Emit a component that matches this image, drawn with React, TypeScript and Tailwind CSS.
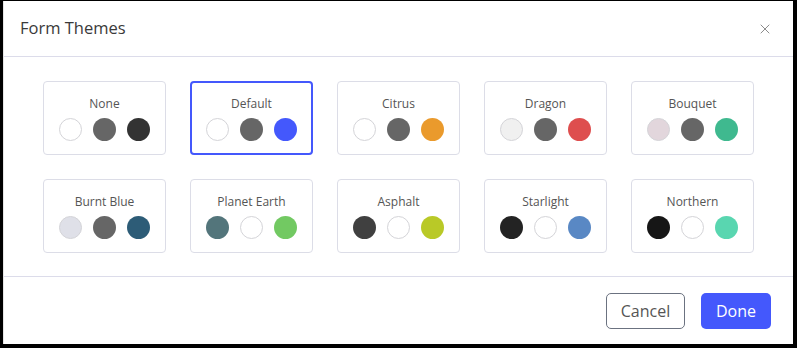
import { X } from 'lucide-react'

interface Theme {
  name: string
  colors: string[]
}

const THEMES: Theme[] = [
  { name: 'None', colors: ['#ffffff', '#666666', '#333333'] },
  { name: 'Default', colors: ['#ffffff', '#666666', '#4458fc'] },
  { name: 'Citrus', colors: ['#ffffff', '#666666', '#ea9a2c'] },
  { name: 'Dragon', colors: ['#f0f0f0', '#666666', '#de4e4e'] },
  { name: 'Bouquet', colors: ['#e2d6dc', '#666666', '#3fb98f'] },
  { name: 'Burnt Blue', colors: ['#dfe0e8', '#666666', '#2d5c77'] },
  { name: 'Planet Earth', colors: ['#53757b', '#ffffff', '#72c962'] },
  { name: 'Asphalt', colors: ['#404040', '#ffffff', '#b9c927'] },
  { name: 'Starlight', colors: ['#232323', '#ffffff', '#5988c4'] },
  { name: 'Northern', colors: ['#161616', '#ffffff', '#59d6b0'] },
]

const SELECTED = 'Default'

function Swatch({ color }: { color: string }) {
  const light = color === '#ffffff' || color === '#f0f0f0' || color === '#dfe0e8' || color === '#e2d6dc'
  return (
    <span
      className={`block w-[23px] h-[23px] rounded-full ${light ? 'border border-[#d4d4d8]' : ''}`}
      style={{ backgroundColor: color }}
    />
  )
}

function ThemeCard({ theme }: { theme: Theme }) {
  const active = theme.name === SELECTED
  return (
    <button
      className={`h-[74px] flex flex-col items-center bg-white rounded-[4px] ${
        active ? 'border-2 border-[#4458fc] pt-[12px]' : 'border border-[#dcdde7] pt-[13px]'
      }`}
    >
      <span className="text-[12px] leading-[18px] text-[#555]">{theme.name}</span>
      <span className="flex gap-[11px] mt-[5px]">
        {theme.colors.map((c, i) => (
          <Swatch key={i} color={c} />
        ))}
      </span>
    </button>
  )
}

export default function App() {
  return (
    <div
      className="w-[797px] h-[348px] bg-black pl-[3px] pt-[1px] pr-[4px] pb-[4px]"
      style={{ fontFamily: '"Open Sans", "Liberation Sans", sans-serif' }}
    >
      <div className="h-full bg-white flex flex-col border-l border-[#e5e5e5]">
        {/* Header */}
        <div className="h-[56px] flex items-center justify-between pl-[16px] pr-[20px] border-b border-[#dcdcea]">
          <h2 className="text-[16.5px] text-[#3a3a3a]">Form Themes</h2>
          <X className="w-[16px] h-[16px] text-[#7a7a7a]" strokeWidth={1.3} />
        </div>

        {/* Body */}
        <div className="flex-1 px-[39px] pt-[24px] border-b border-[#dcdcea]">
          <div className="grid grid-cols-[repeat(5,123px)] gap-x-[24px] gap-y-[24px]">
            {THEMES.map((t) => (
              <ThemeCard key={t.name} theme={t} />
            ))}
          </div>
        </div>

        {/* Footer */}
        <div className="h-[67px] flex items-start justify-end gap-[16px] pt-[16px] pr-[22px]">
          <button className="w-[79px] h-[36px] rounded-[5px] border border-[#6b7280] text-[16px] text-[#555] bg-white">
            Cancel
          </button>
          <button className="w-[70px] h-[36px] rounded-[5px] bg-[#4458fc] text-[16px] text-white">
            Done
          </button>
        </div>
      </div>
    </div>
  )
}
